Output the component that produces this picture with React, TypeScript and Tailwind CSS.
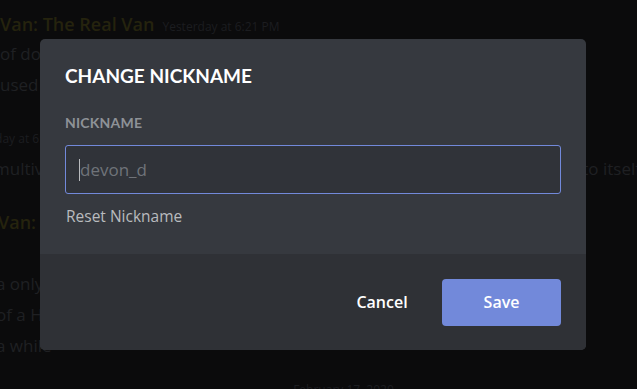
export default function App() {
  const font = { fontFamily: '"Open Sans", "Noto Sans", sans-serif' }
  const lato = { fontFamily: 'Lato, "Open Sans", sans-serif' }
  return (
    <div className="relative w-[637px] h-[389px] overflow-hidden bg-[#0b0b0c]" style={font}>
      {/* chat behind the overlay */}
      <div className="flex flex-col text-[17px] text-[#1f2023] leading-[20px] whitespace-nowrap">
        <div className="mt-[14px] flex items-baseline gap-[8px]">
          <span className="text-[#25230e] font-semibold text-[18px]">Van: The Real Van</span>
          <span className="text-[12px] text-[#1c1d20]">Yesterday at 6:21 PM</span>
        </div>
        <div className="mt-[7px]">of doing things and then</div>
        <div className="mt-[11px]">used to be</div>
        <div className="mt-[34px] text-[12px] text-[#1c1d20] -ml-[40px]">Yesterday at 6:21 PM</div>
        <div className="mt-[10px] flex justify-between">
          <span className="-ml-[6px]">multiverse</span>
          <span className="-mr-[4px]">to itself</span>
        </div>
        <div className="mt-[33px] text-[#25230e] font-semibold text-[18px] -ml-[2px]">Van: The Real Van</div>
        <div className="mt-[42px] -ml-[4px]">a only one</div>
        <div className="mt-[11px] -ml-[4px]">of a Hero</div>
        <div className="mt-[11px] -ml-[4px]">a while</div>
        <div className="mt-[24px] self-center text-[12px] text-[#1c1d20] pl-[50px]">February 17, 2020</div>
      </div>

      {/* modal */}
      <div className="absolute left-[40px] top-[39px] w-[546px] h-[311px] rounded-[5px] bg-[#36393f] flex flex-col overflow-hidden">
        <div className="flex-1 px-[25px] pt-[24px]">
          <div className="text-[19px] font-bold text-white leading-[26px]" style={lato}>CHANGE NICKNAME</div>
          <div className="mt-[26px] text-[14px] font-bold text-[#8e9297] leading-[16px] tracking-[0.2px]" style={lato}>NICKNAME</div>
          <div className="mt-[14px] h-[49px] rounded-[3px] border border-[#7289da] bg-[#303339] flex items-center px-[13px]">
            <span className="w-px h-[22px] bg-[#b9bbbe]" />
            <span className="text-[17px] text-[#6f7379]">devon_d</span>
          </div>
          <div className="mt-[12px] text-[15.5px] font-medium text-[#b9bbbe] leading-[20px] pl-px">Reset Nickname</div>
        </div>
        <div className="h-[96px] bg-[#2f3136] flex items-center justify-end pr-[25px] gap-[12px]">
          <button className="w-[96px] h-[47px] text-[16px] font-semibold text-white">Cancel</button>
          <button className="w-[119px] h-[47px] rounded-[4px] bg-[#7289da] text-[16px] font-semibold text-white">Save</button>
        </div>
      </div>
    </div>
  )
}
